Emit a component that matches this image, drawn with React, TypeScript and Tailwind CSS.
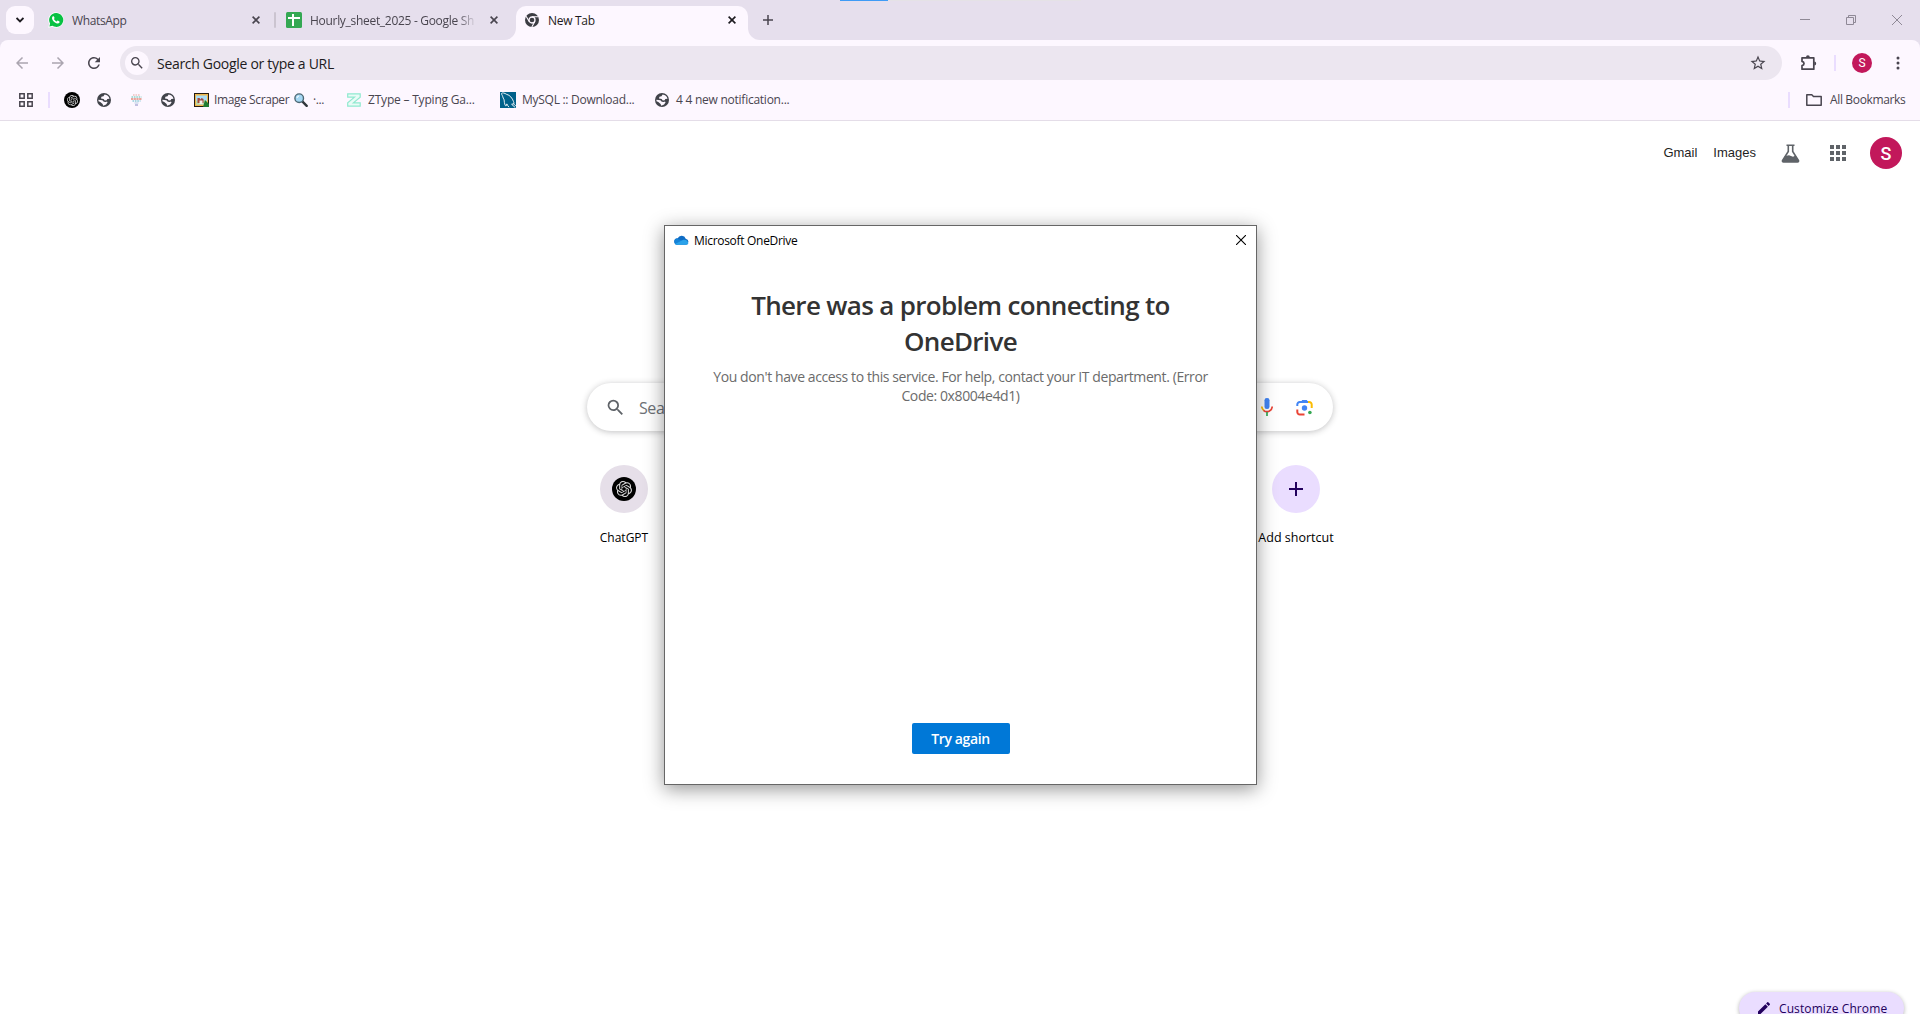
import type { ReactNode } from 'react';
import { SiOpenai } from 'react-icons/si';
import { MdSearch, MdStarBorder, MdApps, MdEdit, MdRefresh } from 'react-icons/md';

function Slot({ className, children }: { className: string; children?: ReactNode }) {
  return <div className={`flex shrink-0 items-center ${className}`}>{children}</div>;
}

function TabClose({ dark = false }: { dark?: boolean }) {
  return (
    <svg className={dark ? 'size-2 text-[#1d1b20]' : 'size-2 text-[#49454f]'} viewBox="0 0 8 8" stroke="currentColor" strokeWidth="1.6">
      <path d="M.6.6l6.8 6.8M7.4.6L.6 7.4" />
    </svg>
  );
}

function WhatsApp() {
  return (
    <svg className="size-4" viewBox="0 0 16 16">
      <path d="M8 .3a7.7 7.7 0 0 0-6.7 11.5L.3 15.7l4-1A7.7 7.7 0 1 0 8 .3z" fill="#fff" />
      <path d="M8 1.1a6.9 6.9 0 0 0-5.9 10.4l-.7 3 3.1-.8A6.9 6.9 0 1 0 8 1.1z" fill="#08c143" />
      <path d="M5.9 4.5c-.2-.5-.9-.5-1.3 0-1.5 2 .2 4.3 2 5.7 1.9 1.4 4 1.8 4.9.3.3-.6.2-.9-.1-1.1l-1.5-.8c-.3-.1-.5 0-.7.3l-.5.6c-.8-.2-2.4-1.6-2.7-2.5l.6-.9z" fill="#fff" />
    </svg>
  );
}

function Sheets() {
  return (
    <svg className="size-4" viewBox="0 0 16 16">
      <rect width="16" height="16" rx="1.5" fill="#34a853" />
      <path d="M2 6h12M7 2v12" stroke="#fff" strokeWidth="2" />
    </svg>
  );
}

function ChromeMark() {
  return (
    <svg className="size-[14px]" viewBox="0 0 14 14">
      <circle cx="7" cy="7" r="7" fill="#3c3d43" />
      <circle cx="7" cy="7" r="3" fill="none" stroke="#fdf7ff" strokeWidth="1.3" />
      <path d="M7 3.8h6.3M4.2 8.6L1.1 3.2M9.8 8.6L6.8 14" stroke="#fdf7ff" strokeWidth="1.1" />
    </svg>
  );
}

function GptBadge({ small = false }: { small?: boolean }) {
  return (
    <div className={`flex items-center justify-center rounded-full bg-black text-[#d8d8d8] ${small ? 'size-4' : 'size-6'}`}>
      <SiOpenai className={small ? 'size-[11px]' : 'size-4'} />
    </div>
  );
}

function Globe() {
  return (
    <svg className="size-[14px]" viewBox="0 0 14 14">
      <circle cx="7" cy="7" r="7" fill="#41434a" />
      <path d="M7.6 1.5L6.5 3.2 4.4 3.8 4 5.6l2.6.3 1.2 1.5 1.9-.2.6-1.3 2.2-.2a5.6 5.6 0 0 0-4.9-4.2z" fill="#fdf7ff" />
      <path d="M1.4 6.8l4 .5 1.4 1.5 2.1.1 1-.5.7.9-1.500 2.300-2.800 1.100-.700-1.700-2.300-1.900L1.500 8.200z" fill="#fdf7ff" />
    </svg>
  );
}

function Beads() {
  return (
    <svg className="h-3 w-[11px]" viewBox="0 0 11 12">
      <path d="M2 1h7" stroke="#e8a7a0" strokeWidth="1.2" strokeDasharray="1.6 .9" />
      <path d="M.5 3h10" stroke="#8dd3c9" strokeWidth="1.3" strokeDasharray="1.6 .8" />
      <path d="M0 5h11" stroke="#e08a7c" strokeWidth="1.5" strokeDasharray="2.200 .500" />
      <path d="M1.500 7h8" stroke="#8ccbd8" strokeWidth="1.3" strokeDasharray="1.600 .8" />
      <path d="M3.500 9h4" stroke="#c7d6ea" strokeWidth="1.300" />
      <path d="M4 11h3" stroke="#b3b1da" strokeWidth="1.600" />
    </svg>
  );
}

function PictureIcon() {
  return (
    <svg className="h-[14px] w-[15px]" viewBox="0 0 15 14">
      <rect width="15" height="14" fill="#241b12" />
      <rect x="1" y="1" width="13" height="12" fill="#eeb64a" />
      <rect x="2" y="2.5" width="11" height="9" fill="#a9dcf5" />
      <path d="M2 11.5V8l2-1 2 2 3-2 4 1v3.5z" fill="#b9d9a8" />
      <path d="M3.500 5h2l1 1.500 1-1.500 2 1v4h-6z" fill="#a4483d" />
      <path d="M5.500 7.500h3V11h-3z" fill="#f4f0ec" />
      <path d="M11 7l4 4v3H9z" fill="#207c32" />
    </svg>
  );
}

function Magnifier() {
  return (
    <svg className="size-[14px]" viewBox="0 0 14 14">
      <path d="M8.3 8.3l4.400 4.500" stroke="#30373b" strokeWidth="2.400" strokeLinecap="round" />
      <circle cx="5.2" cy="5.2" r="4.3" fill="#a5d8f4" stroke="#4c6773" strokeWidth="1.4" />
      <path d="M3 5a2.200 2.200 0 0 1 2-2" stroke="#fff" fill="none" />
    </svg>
  );
}

function ZIcon() {
  return (
    <svg className="size-[14px]" viewBox="0 0 14 14" fill="#e9fbf6" stroke="#8fe9cf" strokeWidth="1.2">
      <path d="M.7.8h12.500v3.300L6.400 9.800h6.800v3.400H.7v-3.300L7.500 4.200H.7z" />
    </svg>
  );
}

function MySqlDolphin() {
  return (
    <svg className="size-4" viewBox="0 0 16 16" fill="none" stroke="#fff" strokeWidth=".9" strokeLinejoin="round" strokeLinecap="round">
      <rect width="16" height="16" fill="#00618a" stroke="none" />
      <path d="M15.500 13.500c-1-1-1.800-1.200-1.700-1.800.3-.5.200-1-.3-2.200C12.300 6.300 10 3 6.500 2.300 4.800 1 2.200.5 1.600 1.400c-.4.800.800 1.800 1 2.900.3 1.300.9 2.300 1.500 3.500.2 1.500.2 3.700 1.200 5.700.8.700 1.300.3 1.500-1.600.4.900 1 2 1.900 3M13.600 11.800l-2 .5 3.400 3" />
    </svg>
  );
}

function OneDriveCloud() {
  return (
    <svg className="h-[10px] w-[15px]" viewBox="0 0 15 10">
      <path d="M3.7 3.2A4.3 4.3 0 0 1 11.700 3.700 3.100 3.100 0 0 1 12 9.800H3.300a3.200 3.200 0 0 1 .4-6.600z" fill="#0f6cc4" />
      <path d="M3.3 9.8A3.200 3.200 0 0 1 2.900 3.500L9 6z" fill="#1482d8" />
      <path d="M1 8.900L9.300 4.800a4 4 0 0 1 5 4A2.600 2.600 0 0 1 12 9.800H3.300A3.600 3.600 0 0 1 1 8.900z" fill="#2aa2ea" />
    </svg>
  );
}

function TabStrip() {
  return (
    <header className="flex h-10 bg-[#e6dfed] text-[12px] text-[#49454f]">
      <Slot className="w-[48px] pl-[6px]">
        <div className="flex size-7 items-center justify-center rounded-[9px] bg-[#fdf7ff]">
          <svg className="h-[6px] w-2" viewBox="0 0 8 6" fill="none" stroke="#1d1b20" strokeWidth="1.900"><path d="M.5 1L4 4.500 7.500 1" /></svg>
        </div>
      </Slot>
      <Slot className="w-6"><WhatsApp /></Slot>
      <Slot className="w-[180px] pt-[2px] tracking-[-0.35px]">WhatsApp</Slot>
      <Slot className="w-[22px]"><TabClose /></Slot>
      <Slot className="w-3"><div className="h-4 w-[2px] rounded bg-[#cbc4d0]" /></Slot>
      <Slot className="w-6"><Sheets /></Slot>
      <Slot className="w-[180px] pt-[2px]">
        <span className="w-[167px] overflow-hidden whitespace-nowrap tracking-[-0.3px] [mask-image:linear-gradient(to_right,black_88%,transparent)]">Hourly_sheet_2025 - Google Sh</span>
      </Slot>
      <Slot className="w-[14px]"><TabClose /></Slot>
      <div className="flex w-[256px] shrink-0">
        <div className="flex w-3 items-end bg-[#fdf7ff]"><div className="size-full rounded-br-[12px] bg-[#e6dfed]" /></div>
        <div className="flex w-[232px] flex-col justify-end">
          <div className="flex h-[34px] items-center rounded-t-[10px] bg-[#fdf7ff] pb-[6px] pl-[9px] text-[#1d1b20]">
            <ChromeMark />
            <span className="ml-[9px] w-[180px] pt-[2px] tracking-[-0.3px]">New Tab</span>
            <TabClose dark />
          </div>
        </div>
        <div className="flex w-3 bg-[#fdf7ff]"><div className="size-full rounded-bl-[12px] bg-[#e6dfed]" /></div>
      </div>
      <Slot className="ml-[3px]">
        <svg className="size-[10px]" viewBox="0 0 10 10" stroke="#49454f" strokeWidth="1.500"><path d="M5 0v10M0 5h10" /></svg>
      </Slot>
      <div className="ml-auto flex items-center gap-9 pr-[18px]">
        <svg className="size-[10px]" viewBox="0 0 10 10" stroke="#8f8996" shapeRendering="crispEdges"><path d="M0 4.500h10" /></svg>
        <svg className="size-[10px]" viewBox="0 0 10 10" fill="none" stroke="#8f8996"><path d="M.5 2.500h7v7h-7zM2.500 2.500v-2h7v7h-2" /></svg>
        <svg className="size-[10px]" viewBox="0 0 10 10" stroke="#8f8996"><path d="M0 0l10 10M10 0L0 10" /></svg>
      </div>
    </header>
  );
}

function Toolbar() {
  return (
    <div className="bg-[#e6dfed]">
      <div className="flex h-[46px] items-center rounded-t-[8px] bg-[#fdf7ff]">
        <Slot className="w-[36px] pl-4">
          <svg className="h-3 w-3" viewBox="0 0 12 12" fill="none" stroke="#aba5b0" strokeWidth="1.500"><path d="M12 6H1M6.500.5L1 6l5.500 5.500" /></svg>
        </Slot>
        <Slot className="w-[36px] pl-4">
          <svg className="h-3 w-3" viewBox="0 0 12 12" fill="none" stroke="#aba5b0" strokeWidth="1.500"><path d="M0 6h11M5.500.5L11 6l-5.500 5.500" /></svg>
        </Slot>
        <Slot className="w-12 pl-[13px]"><MdRefresh className="size-[18px] text-[#49454f]" /></Slot>
        <div className="flex h-[34px] w-[1662px] items-center rounded-full bg-[#ece6f0] pl-[5px]">
          <div className="flex size-6 items-center justify-center rounded-full bg-[#fdf7ff]"><MdSearch className="size-4 text-[#49454f]" /></div>
          <span className="ml-2 text-[14px] tracking-[-0.3px] text-[#1d1b20]">Search Google or type a URL</span>
          <MdStarBorder className="ml-auto mr-[15px] size-[18px] text-[#49454f]" />
        </div>
        <svg className="ml-[18px] size-[18px]" viewBox="0 0 18 18" fill="none" stroke="#49454f" strokeWidth="1.700">
          <path d="M2 3.800h11.800v11.400H2v-3.600c2.700-.5 2.700-3.700 0-4.200z" strokeLinejoin="round" />
          <path d="M6 3.200a1.900 1.900 0 0 1 3.800 0zM14.300 7.600a1.900 1.900 0 0 1 0 3.800z" fill="#49454f" stroke="none" />
        </svg>
        <div className="ml-4 h-4 w-[2px] bg-[#eaddff]" />
        <div className="ml-4 flex size-5 items-center justify-center rounded-full bg-[#c2185b] font-[Roboto] text-[12px] text-white">S</div>
        <svg className="ml-6 h-[14px] w-1" viewBox="0 0 4 14" fill="#49454f"><circle cx="2" cy="2" r="1.500" /><circle cx="2" cy="7" r="1.500" /><circle cx="2" cy="12" r="1.500" /></svg>
      </div>
    </div>
  );
}

function Bookmarks() {
  return (
    <div className="flex h-[35px] items-center border-b border-[#e4dde8] bg-[#fdf7ff] pb-[6px] text-[12px] whitespace-nowrap text-[#49454f]">
      <Slot className="w-[48px] pl-[19px]">
        <svg className="size-[14px]" viewBox="0 0 14 14" fill="none" stroke="#49454f" strokeWidth="1.500"><path d="M.8.8h4.400v4.400H.8zM8.800.8h4.400v4.400H8.800zM.8 8.800h4.400v4.400H.8zM8.800 8.800h4.400v4.400H8.800z" /></svg>
      </Slot>
      <Slot className="w-4"><div className="h-4 w-[2px] bg-[#eaddff]" /></Slot>
      <Slot className="w-[33px]"><GptBadge small /></Slot>
      <Slot className="w-[34px]"><Globe /></Slot>
      <Slot className="w-[30px]"><Beads /></Slot>
      <Slot className="w-[33px]"><Globe /></Slot>
      <Slot className="w-5"><PictureIcon /></Slot>
      <Slot className="w-[80px] tracking-[-0.4px]">Image Scraper</Slot>
      <Slot className="w-[19px]"><Magnifier /></Slot>
      <Slot className="w-[34px] tracking-[-0.4px]">·...</Slot>
      <Slot className="w-[21px]"><ZIcon /></Slot>
      <Slot className="w-[132px] tracking-[-0.2px]">ZType – Typing Ga...</Slot>
      <Slot className="w-[22px]"><MySqlDolphin /></Slot>
      <Slot className="w-[133px] tracking-[-0.27px]">MySQL :: Download...</Slot>
      <Slot className="w-[21px]"><Globe /></Slot>
      <Slot className="tracking-[-0.25px]">4 4 new notification...</Slot>
      <div className="ml-auto flex items-center">
        <div className="h-4 w-[2px] bg-[#eaddff]" />
        <svg className="ml-4 h-3 w-4" viewBox="0 0 16 12" fill="none" stroke="#49454f" strokeWidth="1.500" strokeLinejoin="round"><path d="M.8.8h5l1.700 1.700h7.700v8.700H.8z" /></svg>
        <Slot className="ml-2 w-[90px] tracking-[-0.35px]">All Bookmarks</Slot>
      </div>
    </div>
  );
}

function NewTabPage() {
  return (
    <main className="flex h-[893px] flex-col bg-white">
      <nav className="flex h-[64px] items-center justify-end pr-[18px] font-['Liberation_Sans'] text-[13px] text-[#1f1f1f]">
        <span className="mr-4">Gmail</span>
        <span className="mr-[25px]">Images</span>
        <svg className="mr-[26px] h-[19px] w-[19px]" viewBox="0 0 19 19" fill="none" stroke="#5f6368" strokeWidth="1.600">
          <path d="M5.500 1.300h8M7.300 1.500v6L1.500 16.500q-.3 1.300 1 1.400h14q1.300-.1 1-1.400L11.700 7.500v-6" />
          <path d="M4 12l4-.7 4 1.500 2.500-1.300 2.900 5-.9 1.500H2.500l-.8-1.500z" fill="#5f6368" stroke="none" />
        </svg>
        <MdApps className="mr-[20px] size-6 text-[#5f6368]" />
        <div className="flex size-8 items-center justify-center rounded-full bg-[#c2185b] font-[Roboto] text-[18px] font-medium text-white">S</div>
      </nav>
      <div className="mt-[198px] ml-[587px] flex h-12 w-[746px] items-center rounded-full bg-white shadow-[0_1px_6px_rgba(32,33,36,0.28)]">
        <MdSearch className="ml-[18px] size-[21px] text-[#5f6368]" />
        <span className="ml-[13px] pt-[2px] text-[16px] tracking-[-0.4px] text-[#6d7176]">Search Google or type a URL</span>
        <svg className="ml-auto h-[18px] w-3" viewBox="0 0 12 18" fill="none" strokeWidth="1.700">
          <rect x="3.500" y="0" width="5" height="11" rx="2.300" fill="#4285f4" />
          <path d="M.8 8.500a5.200 5.200 0 0 0 2 4" stroke="#fbbc04" /><path d="M2.500 12.300A5.200 5.200 0 0 0 11.200 8.500" stroke="#ea4335" /><path d="M6 14v4" stroke="#34a853" />
        </svg>
        <svg className="mr-5 ml-[23px] size-[17px]" viewBox="0 0 17 17" fill="none" strokeWidth="2">
          <path d="M1.300 7V5.500A2.500 2.500 0 0 1 3.800 3H12" stroke="#4285f4" /><path d="M5 3l1.200-2h4.600L12 3z" fill="#4285f4" />
          <path d="M12 3h1.200a2.500 2.500 0 0 1 2.500 2.500V9" stroke="#fbbc04" />
          <path d="M1.300 10.500V13a2.500 2.500 0 0 0 2.500 2.500h4.700" stroke="#ea4335" />
          <circle cx="8.500" cy="9" r="2.700" fill="#4285f4" /><circle cx="13.900" cy="13.500" r="1.800" fill="#34a853" />
        </svg>
      </div>
      <div className="mt-[34px] flex justify-between px-[568px] text-[12px] text-black">
        <div className="flex w-28 flex-col items-center">
          <div className="flex size-12 items-center justify-center rounded-full bg-[#e6dfe9]"><GptBadge /></div>
          <span className="mt-4 tracking-[0px]">ChatGPT</span>
        </div>
        <div className="flex w-28 flex-col items-center">
          <div className="flex size-12 items-center justify-center rounded-full bg-[#eaddff]">
            <svg className="size-[14px]" viewBox="0 0 14 14" stroke="#22005d" strokeWidth="2"><path d="M7 0v14M0 7h14" /></svg>
          </div>
          <span className="mt-4 text-[12.500px] leading-[18px] tracking-[0px]">Add shortcut</span>
        </div>
      </div>
      <div className="mt-auto mr-4 -mb-[10px] flex h-8 w-[165px] items-center self-end rounded-full bg-[#eaddff] pl-[17px] text-[12px] text-[#22005d] shadow-[0_1px_4px_rgba(0,0,0,0.3)]">
        <MdEdit className="size-4" />
        <span className="ml-[7px] pt-[2px] tracking-[0.1px]">Customize Chrome</span>
      </div>
    </main>
  );
}

function OneDriveDialog() {
  return (
    <section className="absolute top-[225px] left-[664px] flex h-[560px] w-[593px] flex-col items-center border border-[#666] bg-white shadow-[0_4px_18px_rgba(0,0,0,0.42)]">
      <div className="flex h-7 w-full items-center pr-[10px] pl-[9px] text-[12px] text-black">
        <OneDriveCloud />
        <span className="ml-[5px] pt-px tracking-[-0.3px]">Microsoft OneDrive</span>
        <svg className="ml-auto size-[10px]" viewBox="0 0 10 10" stroke="#000" strokeWidth="1.100"><path d="M0 0l10 10M10 0L0 10" /></svg>
      </div>
      <h1 className="mt-[33px] text-center text-[26px] leading-9 font-semibold tracking-[-0.68px] text-[#333]">There was a problem connecting to<br />OneDrive</h1>
      <p className="mt-[8px] text-center text-[14px] leading-[19px] tracking-[-0.4px] whitespace-nowrap text-[#6b6b6b]">You don't have access to this service. For help, contact your IT department. (Error<br />Code: 0x8004e4d1)</p>
      <button className="mt-auto mb-[30px] h-[31px] w-[98px] rounded-[2px] bg-[#0078d7] text-[14px] font-semibold tracking-[-0.4px] text-white">Try again</button>
    </section>
  );
}

export default function App() {
  return (
    <div className="relative h-[1014px] w-[1920px] overflow-hidden bg-white font-['Open_Sans',sans-serif]">
      <TabStrip />
      <Toolbar />
      <Bookmarks />
      <NewTabPage />
      <div className="absolute top-0 left-[840px] flex h-px w-[241px] bg-[#e5e2e6]"><div className="w-12 bg-[#3f9bf6]" /></div>
      <OneDriveDialog />
    </div>
  );
}
